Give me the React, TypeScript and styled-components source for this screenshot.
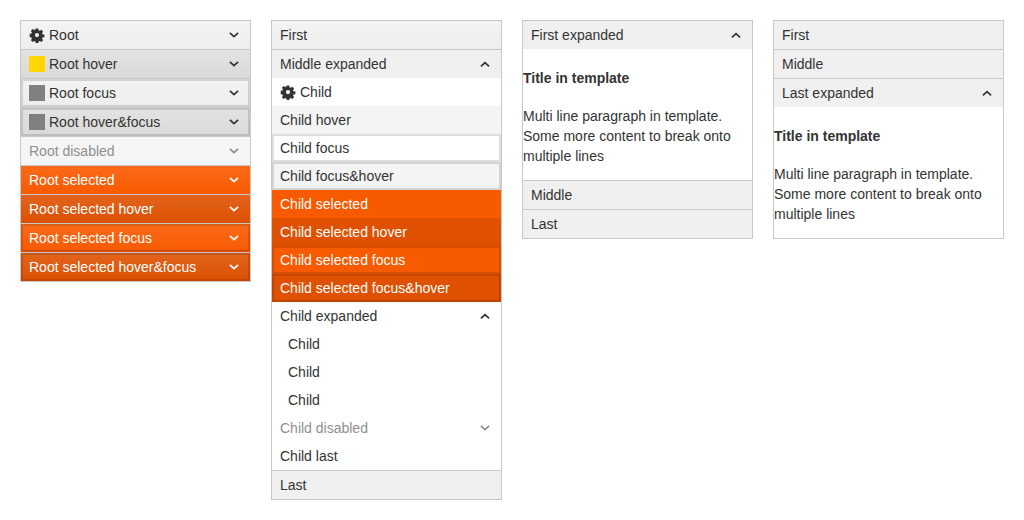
import styled, { createGlobalStyle, css } from "styled-components";

const GlobalStyle = createGlobalStyle`
  html, body {
    margin: 0;
    background: #fff;
  }
  body {
    font-family: "Liberation Sans", Arial, sans-serif;
    font-size: 14px;
    line-height: 20px;
    color: #333;
  }
`;

const Page = styled.div`
  display: grid;
  grid-template-columns: repeat(4, 231px);
  column-gap: 20px;
  align-items: start;
  padding: 20px;
`;

const Panel = styled.div`
  border: 1px solid #c8c8c8;
  border-top: 0;
  background: #fff;
`;

const focusRing = css`
  box-shadow: inset 0 0 0 2px rgba(0, 0, 0, 0.13);
`;

const RootHeader = styled.div<{
  $selected?: boolean;
  $hover?: boolean;
  $focus?: boolean;
  $disabled?: boolean;
  $flat?: boolean;
}>`
  display: flex;
  align-items: center;
  height: 28px;
  padding: 0 8px;
  border-top: 1px solid #c8c8c8;
  color: #333;
  background: #f0f0f0;
  background-image: linear-gradient(#f3f3f3, #eeeeee);

  ${(p) =>
    p.$flat &&
    css`
      background-image: none;
    `}
  ${(p) =>
    p.$hover &&
    css`
      background: #dddddd;
      background-image: linear-gradient(#e3e3e3, #d9d9d9);
    `}
  ${(p) =>
    p.$selected &&
    css`
      color: #fff;
      background: #f95a00;
      background-image: linear-gradient(#fa6a1a, #f85a00);
    `}
  ${(p) =>
    p.$selected &&
    p.$hover &&
    css`
      background: #e05100;
      background-image: linear-gradient(#e2641e, #dc5000);
    `}
  ${(p) => p.$focus && focusRing}
  ${(p) =>
    p.$disabled &&
    css`
      color: #8f8f8f;
      background: #f5f5f5;
      background-image: none;
    `}
`;

const ChildRow = styled.div<{
  $selected?: boolean;
  $hover?: boolean;
  $focus?: boolean;
  $disabled?: boolean;
  $nested?: boolean;
}>`
  display: flex;
  align-items: center;
  height: 28px;
  padding: 0 8px;
  padding-left: ${(p) => (p.$nested ? "16px" : "8px")};
  color: #333;
  ${(p) =>
    p.$hover &&
    css`
      background: #f4f4f4;
    `}
  ${(p) =>
    p.$selected &&
    css`
      color: #fff;
      background: #f85a00;
    `}
  ${(p) =>
    p.$selected &&
    p.$hover &&
    css`
      background: #df5100;
    `}
  ${(p) => p.$focus && focusRing}
  ${(p) =>
    p.$disabled &&
    css`
      color: #8f8f8f;
    `}
`;

const Label = styled.span`
  flex: 1;
  white-space: nowrap;
`;

const LeadIcon = styled.span`
  display: flex;
  flex: none;
  width: 16px;
  height: 16px;
  margin-right: 4px;
`;

const Swatch = styled.span<{ $color: string }>`
  flex: none;
  width: 16px;
  height: 16px;
  margin-right: 4px;
  background: ${(p) => p.$color};
`;

const ChevronBox = styled.svg`
  flex: none;
  width: 16px;
  height: 16px;
`;

const Content = styled.div`
  h4 {
    margin: 18.62px 0;
    font-size: 14px;
    font-weight: 700;
  }
  p {
    margin: 18.62px 0 14px;
  }
`;

function Gear() {
  return (
    <svg viewBox="0 0 16 16" width="16" height="16" fill="#333" fillRule="evenodd">
      <path d="M6.7 1.6h2.6l.4 1.8 1 .4 1.6-1 1.8 1.8-1 1.6.4 1 1.9.4v2.6l-1.9.4-.4 1 1 1.6-1.8 1.8-1.6-1-1 .4-.4 1.9H6.7l-.4-1.9-1-.4-1.6 1-1.8-1.8 1-1.6-.4-1-1.8-.4V6.8l1.8-.4.4-1-1-1.6 1.8-1.8 1.6 1 1-.4zM8 6a2.1 2.1 0 1 0 0 4.2A2.1 2.1 0 0 0 8 6z" />
    </svg>
  );
}

function Chevron({ up }: { up?: boolean }) {
  return (
    <ChevronBox viewBox="0 0 16 16">
      <path
        d={up ? "M3.9 10.4 8 6.6l4.1 3.8" : "M3.9 5.9 8 9.7l4.1-3.8"}
        fill="none"
        stroke="currentColor"
        strokeWidth="1.7"
      />
    </ChevronBox>
  );
}

function Template() {
  return (
    <Content>
      <h4>Title in template</h4>
      <p>
        Multi line paragraph in template.
        <br />
        Some more content to break onto
        <br />
        multiple lines
      </p>
    </Content>
  );
}

function App() {
  return (
    <>
      <GlobalStyle />
      <Page>
        <Panel>
          <RootHeader>
            <LeadIcon>
              <Gear />
            </LeadIcon>
            <Label>Root</Label>
            <Chevron />
          </RootHeader>
          <RootHeader $hover>
            <Swatch $color="#ffd600" />
            <Label>Root hover</Label>
            <Chevron />
          </RootHeader>
          <RootHeader $focus>
            <Swatch $color="#808080" />
            <Label>Root focus</Label>
            <Chevron />
          </RootHeader>
          <RootHeader $hover $focus>
            <Swatch $color="#808080" />
            <Label>Root hover&amp;focus</Label>
            <Chevron />
          </RootHeader>
          <RootHeader $disabled>
            <Label>Root disabled</Label>
            <Chevron />
          </RootHeader>
          <RootHeader $selected>
            <Label>Root selected</Label>
            <Chevron />
          </RootHeader>
          <RootHeader $selected $hover>
            <Label>Root selected hover</Label>
            <Chevron />
          </RootHeader>
          <RootHeader $selected $focus>
            <Label>Root selected focus</Label>
            <Chevron />
          </RootHeader>
          <RootHeader $selected $hover $focus>
            <Label>Root selected hover&amp;focus</Label>
            <Chevron />
          </RootHeader>
        </Panel>

        <Panel>
          <RootHeader>
            <Label>First</Label>
          </RootHeader>
          <RootHeader $flat>
            <Label>Middle expanded</Label>
            <Chevron up />
          </RootHeader>
          <ChildRow>
            <LeadIcon>
              <Gear />
            </LeadIcon>
            <Label>Child</Label>
          </ChildRow>
          <ChildRow $hover>
            <Label>Child hover</Label>
          </ChildRow>
          <ChildRow $focus>
            <Label>Child focus</Label>
          </ChildRow>
          <ChildRow $hover $focus>
            <Label>Child focus&amp;hover</Label>
          </ChildRow>
          <ChildRow $selected>
            <Label>Child selected</Label>
          </ChildRow>
          <ChildRow $selected $hover>
            <Label>Child selected hover</Label>
          </ChildRow>
          <ChildRow $selected $focus>
            <Label>Child selected focus</Label>
          </ChildRow>
          <ChildRow $selected $hover $focus>
            <Label>Child selected focus&amp;hover</Label>
          </ChildRow>
          <ChildRow>
            <Label>Child expanded</Label>
            <Chevron up />
          </ChildRow>
          <ChildRow $nested>
            <Label>Child</Label>
          </ChildRow>
          <ChildRow $nested>
            <Label>Child</Label>
          </ChildRow>
          <ChildRow $nested>
            <Label>Child</Label>
          </ChildRow>
          <ChildRow $disabled>
            <Label>Child disabled</Label>
            <Chevron />
          </ChildRow>
          <ChildRow>
            <Label>Child last</Label>
          </ChildRow>
          <RootHeader $flat>
            <Label>Last</Label>
          </RootHeader>
        </Panel>

        <Panel>
          <RootHeader $flat>
            <Label>First expanded</Label>
            <Chevron up />
          </RootHeader>
          <Template />
          <RootHeader $flat>
            <Label>Middle</Label>
          </RootHeader>
          <RootHeader $flat>
            <Label>Last</Label>
          </RootHeader>
        </Panel>

        <Panel>
          <RootHeader $flat>
            <Label>First</Label>
          </RootHeader>
          <RootHeader $flat>
            <Label>Middle</Label>
          </RootHeader>
          <RootHeader $flat>
            <Label>Last expanded</Label>
            <Chevron up />
          </RootHeader>
          <Template />
        </Panel>
      </Page>
    </>
  );
}

export default App;
